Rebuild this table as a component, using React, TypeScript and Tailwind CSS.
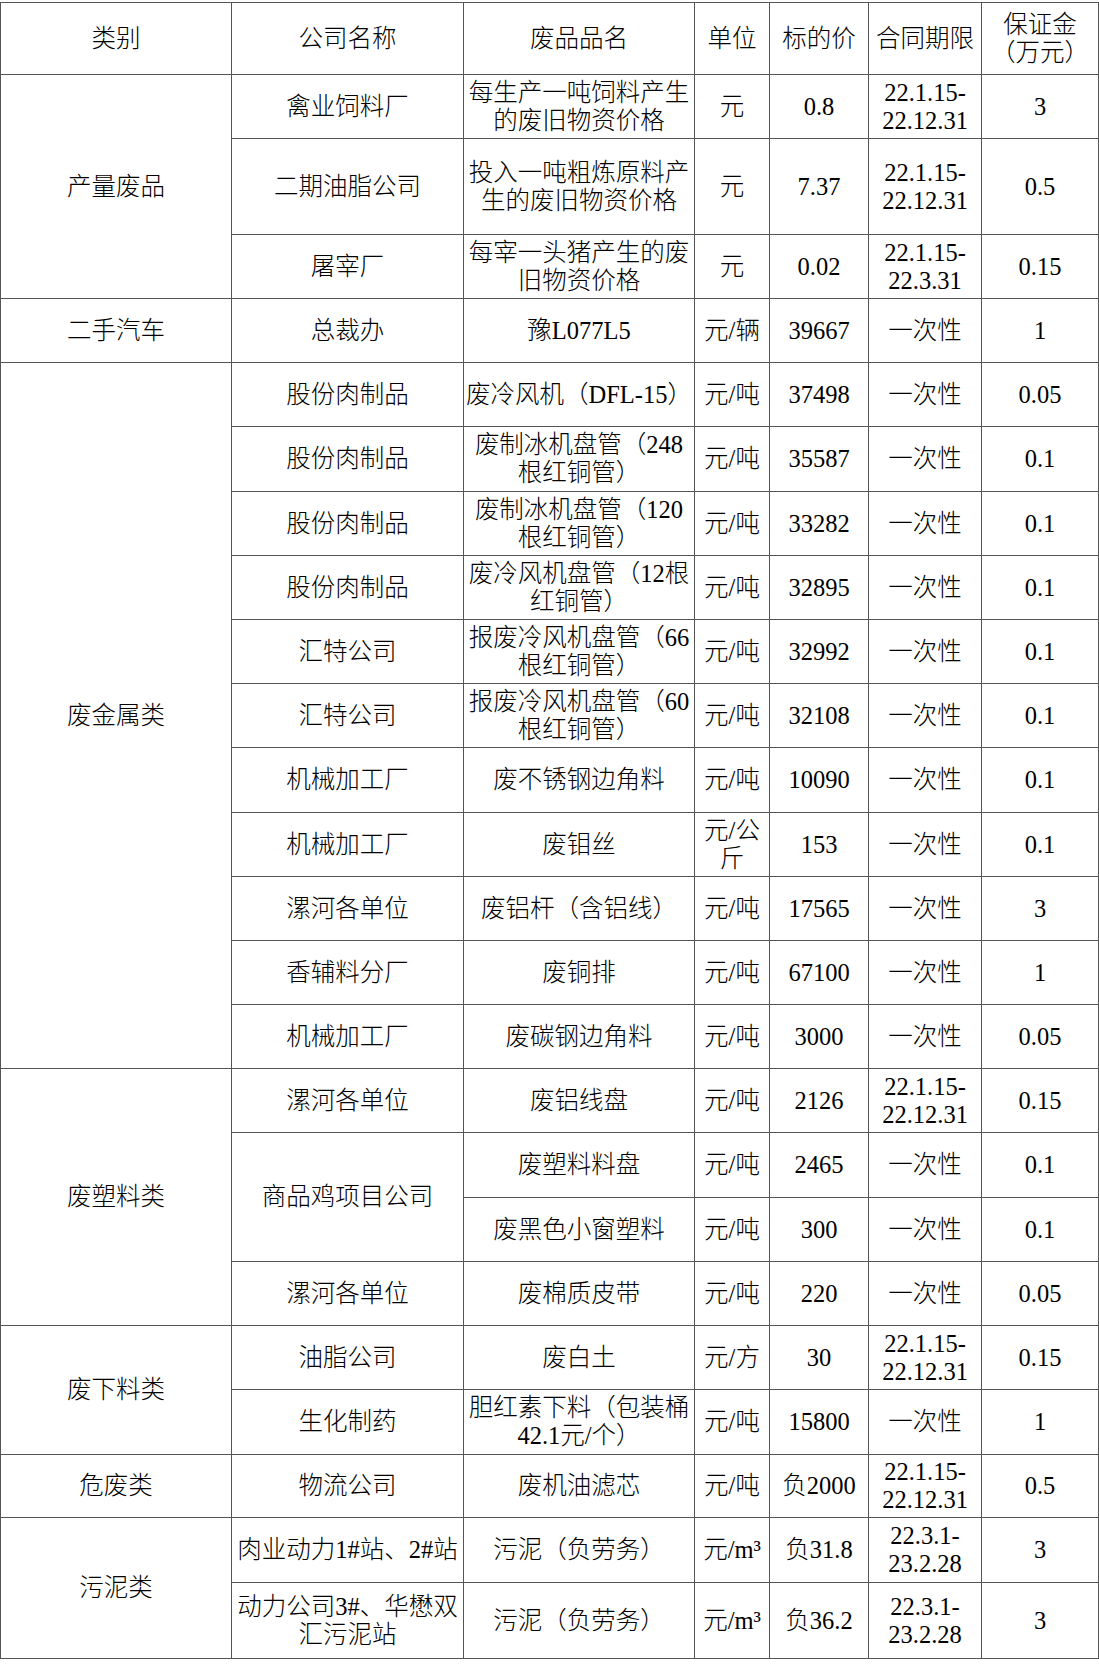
import type { ReactNode } from "react"

type Cell = { text: ReactNode; rowSpan?: number }
type Row = { h: string; cells: Cell[] }

const br = (a: string, b: string) => (
  <>
    {a}
    <br />
    {b}
  </>
)

const c = (text: ReactNode, rowSpan?: number): Cell => ({ text, rowSpan })

const once = "一次性"
const ton = "元/吨"

const rows: Row[] = [
  {
    h: "h-[64px]",
    cells: [c("产量废品", 3), c("禽业饲料厂"), c(br("每生产一吨饲料产生", "的废旧物资价格")), c("元"), c("0.8"), c(br("22.1.15-", "22.12.31")), c("3")],
  },
  {
    h: "h-[96px]",
    cells: [c("二期油脂公司"), c(br("投入一吨粗炼原料产", "生的废旧物资价格")), c("元"), c("7.37"), c(br("22.1.15-", "22.12.31")), c("0.5")],
  },
  {
    h: "h-[64px]",
    cells: [c("屠宰厂"), c(br("每宰一头猪产生的废", "旧物资价格")), c("元"), c("0.02"), c(br("22.1.15-", "22.3.31")), c("0.15")],
  },
  { h: "h-[64px]", cells: [c("二手汽车"), c("总裁办"), c("豫L077L5"), c("元/辆"), c("39667"), c(once), c("1")] },
  { h: "h-[64px]", cells: [c("废金属类", 11), c("股份肉制品"), c("废冷风机（DFL-15）"), c(ton), c("37498"), c(once), c("0.05")] },
  { h: "h-[65px]", cells: [c("股份肉制品"), c(br("废制冰机盘管（248", "根红铜管）")), c(ton), c("35587"), c(once), c("0.1")] },
  { h: "h-[64px]", cells: [c("股份肉制品"), c(br("废制冰机盘管（120", "根红铜管）")), c(ton), c("33282"), c(once), c("0.1")] },
  { h: "h-[64px]", cells: [c("股份肉制品"), c(br("废冷风机盘管（12根", "红铜管）")), c(ton), c("32895"), c(once), c("0.1")] },
  { h: "h-[64px]", cells: [c("汇特公司"), c(br("报废冷风机盘管（66", "根红铜管）")), c(ton), c("32992"), c(once), c("0.1")] },
  { h: "h-[64px]", cells: [c("汇特公司"), c(br("报废冷风机盘管（60", "根红铜管）")), c(ton), c("32108"), c(once), c("0.1")] },
  { h: "h-[65px]", cells: [c("机械加工厂"), c("废不锈钢边角料"), c(ton), c("10090"), c(once), c("0.1")] },
  { h: "h-[64px]", cells: [c("机械加工厂"), c("废钼丝"), c(br("元/公", "斤")), c("153"), c(once), c("0.1")] },
  { h: "h-[64px]", cells: [c("漯河各单位"), c("废铝杆（含铝线）"), c(ton), c("17565"), c(once), c("3")] },
  { h: "h-[64px]", cells: [c("香辅料分厂"), c("废铜排"), c(ton), c("67100"), c(once), c("1")] },
  { h: "h-[64px]", cells: [c("机械加工厂"), c("废碳钢边角料"), c(ton), c("3000"), c(once), c("0.05")] },
  {
    h: "h-[64px]",
    cells: [c("废塑料类", 4), c("漯河各单位"), c("废铝线盘"), c(ton), c("2126"), c(br("22.1.15-", "22.12.31")), c("0.15")],
  },
  { h: "h-[65px]", cells: [c("商品鸡项目公司", 2), c("废塑料料盘"), c(ton), c("2465"), c(once), c("0.1")] },
  { h: "h-[64px]", cells: [c("废黑色小窗塑料"), c(ton), c("300"), c(once), c("0.1")] },
  { h: "h-[64px]", cells: [c("漯河各单位"), c("废棉质皮带"), c(ton), c("220"), c(once), c("0.05")] },
  {
    h: "h-[64px]",
    cells: [c("废下料类", 2), c("油脂公司"), c("废白土"), c("元/方"), c("30"), c(br("22.1.15-", "22.12.31")), c("0.15")],
  },
  { h: "h-[65px]", cells: [c("生化制药"), c(br("胆红素下料（包装桶", "42.1元/个）")), c(ton), c("15800"), c(once), c("1")] },
  {
    h: "h-[63px]",
    cells: [c("危废类"), c("物流公司"), c("废机油滤芯"), c(ton), c("负2000"), c(br("22.1.15-", "22.12.31")), c("0.5")],
  },
  {
    h: "h-[65px]",
    cells: [c("污泥类", 2), c("肉业动力1#站、2#站"), c("污泥（负劳务）"), c("元/m³"), c("负31.8"), c(br("22.3.1-", "23.2.28")), c("3")],
  },
  {
    h: "h-[76px]",
    cells: [c(br("动力公司3#、华懋双", "汇污泥站")), c("污泥（负劳务）"), c("元/m³"), c("负36.2"), c(br("22.3.1-", "23.2.28")), c("3")],
  },
]

const headers: ReactNode[] = ["类别", "公司名称", "废品品名", "单位", "标的价", "合同期限", br("保证金", "（万元）")]

const cellClass = "border border-[#555] text-center align-middle whitespace-nowrap px-0 leading-[28px] font-light"

export default function App() {
  return (
    <div
      className="min-h-[1666px] w-[1099px] bg-white pt-[2px] text-[24.5px] text-black"
      style={{ fontFamily: '"Liberation Serif", "Noto Sans CJK SC", serif' }}
    >
      <table className="w-[1098px] table-fixed border-collapse border border-[#333]">
        <colgroup>
          <col className="w-[231px]" />
          <col className="w-[232px]" />
          <col className="w-[231px]" />
          <col className="w-[75px]" />
          <col className="w-[99px]" />
          <col className="w-[113px]" />
          <col className="w-[117px]" />
        </colgroup>
        <thead>
          <tr className="h-[72px]">
            {headers.map((h, i) => (
              <th key={i} className={cellClass}>
                {h}
              </th>
            ))}
          </tr>
        </thead>
        <tbody>
          {rows.map((row, i) => (
            <tr key={i} className={row.h}>
              {row.cells.map((cell, j) => (
                <td key={j} rowSpan={cell.rowSpan} className={cellClass}>
                  {cell.text}
                </td>
              ))}
            </tr>
          ))}
        </tbody>
      </table>
    </div>
  )
}
